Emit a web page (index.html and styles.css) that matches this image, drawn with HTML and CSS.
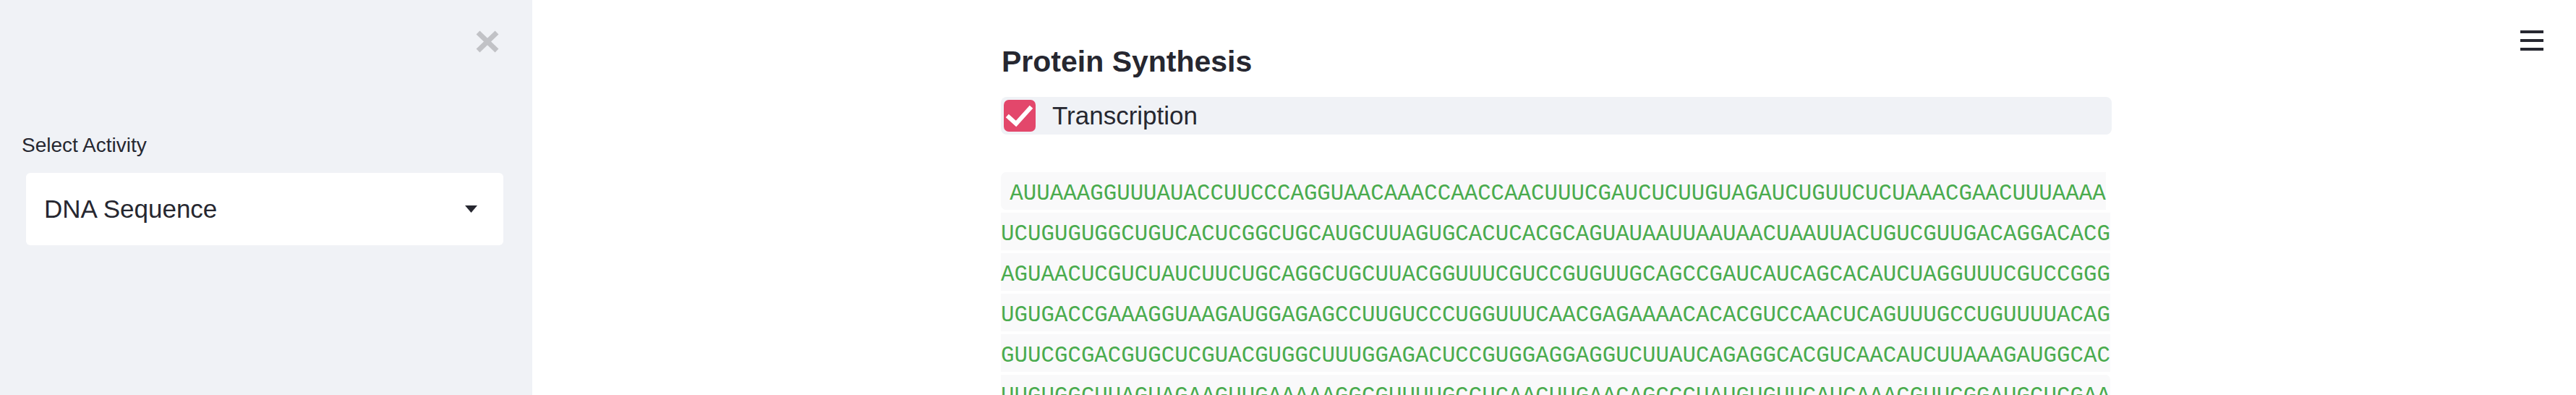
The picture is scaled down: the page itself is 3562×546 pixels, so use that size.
FILE: index.html
```html
<!DOCTYPE html>
<html lang="en">
<head>
<meta charset="utf-8">
<title>Protein Synthesis</title>
<link rel="stylesheet" href="styles.css">
</head>
<body>
<div class="app">
  <aside class="sidebar">
    <div class="close-row">
      <svg class="close-icon" width="32" height="31" viewBox="0 0 32 31" aria-label="Close">
        <line x1="3" y1="3" x2="29" y2="28" />
        <line x1="29" y1="3" x2="3" y2="28" />
      </svg>
    </div>
    <div class="field-label">Select Activity</div>
    <div class="select">
      <span class="select-value">DNA Sequence</span>
      <svg class="select-arrow" width="17" height="10" viewBox="0 0 17 10"><polygon points="0,0 17,0 8.5,10" /></svg>
    </div>
  </aside>
  <main class="main">
    <div class="menu" aria-label="Menu">
      <span class="menu-bar"></span>
      <span class="menu-bar"></span>
      <span class="menu-bar"></span>
    </div>
    <div class="block">
      <h3 class="title">Protein Synthesis</h3>
      <label class="checkbox-row">
        <span class="checkbox">
          <svg width="44" height="44" viewBox="0 0 44 44"><polyline points="7,24 17,33 36,12" /></svg>
        </span>
        <span class="checkbox-label">Transcription</span>
      </label>
      <p class="seq"><code class="rna">AUUAAAGGUUUAUACCUUCCCAGGUAACAAACCAACCAACUUUCGAUCUCUUGUAGAUCUGUUCUCUAAACGAACUUUAAAAUCUGUGUGGCUGUCACUCGGCUGCAUGCUUAGUGCACUCACGCAGUAUAAUUAAUAACUAAUUACUGUCGUUGACAGGACACGAGUAACUCGUCUAUCUUCUGCAGGCUGCUUACGGUUUCGUCCGUGUUGCAGCCGAUCAUCAGCACAUCUAGGUUUCGUCCGGGUGUGACCGAAAGGUAAGAUGGAGAGCCUUGUCCCUGGUUUCAACGAGAAAACACACGUCCAACUCAGUUUGCCUGUUUUACAGGUUCGCGACGUGCUCGUACGUGGCUUUGGAGACUCCGUGGAGGAGGUCUUAUCAGAGGCACGUCAACAUCUUAAAGAUGGCACUUGUGGCUUAGUAGAAGUUGAAAAAGGCGUUUUGCCUCAACUUGAACAGCCCUAUGUGUUCAUCAAACGUUCGGAUGCUCGAA</code></p>
    </div>
  </main>
</div>
</body>
</html>
```

FILE: styles.css
```css
html, body {
  margin: 0;
  padding: 0;
  height: 100%;
  overflow: hidden;
  background: #ffffff;
  font-family: "Liberation Sans", Arial, sans-serif;
  color: #262730;
}

.app {
  display: flex;
  height: 546px;
}

/* Sidebar */
.sidebar {
  width: 736px;
  flex: 0 0 736px;
  background: #f0f2f6;
  box-sizing: border-box;
  padding: 42px 40px 0 36px;
  display: flex;
  flex-direction: column;
}

.close-row {
  display: flex;
  justify-content: flex-end;
  padding-right: 6px;
  height: 31px;
}

.close-icon line {
  stroke: #c1c2c6;
  stroke-width: 7;
  stroke-linecap: butt;
}

.field-label {
  font-size: 28px;
  line-height: 36px;
  margin-top: 110px;
  margin-left: -6px;
  color: #262730;
}

.select {
  margin-top: 20px;
  height: 100px;
  background: #ffffff;
  border-radius: 6px;
  display: flex;
  align-items: center;
  justify-content: space-between;
  padding: 0 36px 0 25px;
}

.select-value {
  font-size: 35px;
  color: #262730;
}

.select-arrow polygon {
  fill: #262730;
}

/* Main area */
.main {
  flex: 1;
  position: relative;
  padding-top: 61px;
  padding-left: 6px;
  display: flex;
  flex-direction: column;
  align-items: center;
}

.menu {
  position: absolute;
  top: 42px;
  right: 45px;
  width: 32px;
  display: flex;
  flex-direction: column;
  gap: 8px;
}

.menu-bar {
  display: block;
  height: 4px;
  background: #262730;
}

.block {
  width: 1536px;
}

.title {
  margin: 0;
  font-size: 41px;
  line-height: 48px;
  font-weight: 700;
  color: #262730;
  padding-left: 1px;
}

.checkbox-row {
  margin-top: 25px;
  height: 52px;
  background: #f0f2f6;
  border-radius: 8px;
  display: flex;
  align-items: center;
  padding-left: 4px;
  gap: 23px;
}

.checkbox {
  width: 44px;
  height: 44px;
  border-radius: 7px;
  background: #e3476b;
  display: flex;
}

.checkbox polyline {
  fill: none;
  stroke: #ffffff;
  stroke-width: 6;
  stroke-linecap: square;
  stroke-linejoin: miter;
}

.checkbox-label {
  font-size: 35px;
  color: #262730;
}

.seq {
  margin: 50px 0 0 0;
  font-size: 35px;
  line-height: 56px;
  word-break: break-all;
}

.rna {
  font-family: "Liberation Mono", "DejaVu Sans Mono", monospace;
  font-size: 30.8px;
  line-height: 40px;
  color: #4aab4e;
  background: #f9f9fa;
  padding: 12px 0 5px 12.3px;
  border-radius: 7px;
}
```
